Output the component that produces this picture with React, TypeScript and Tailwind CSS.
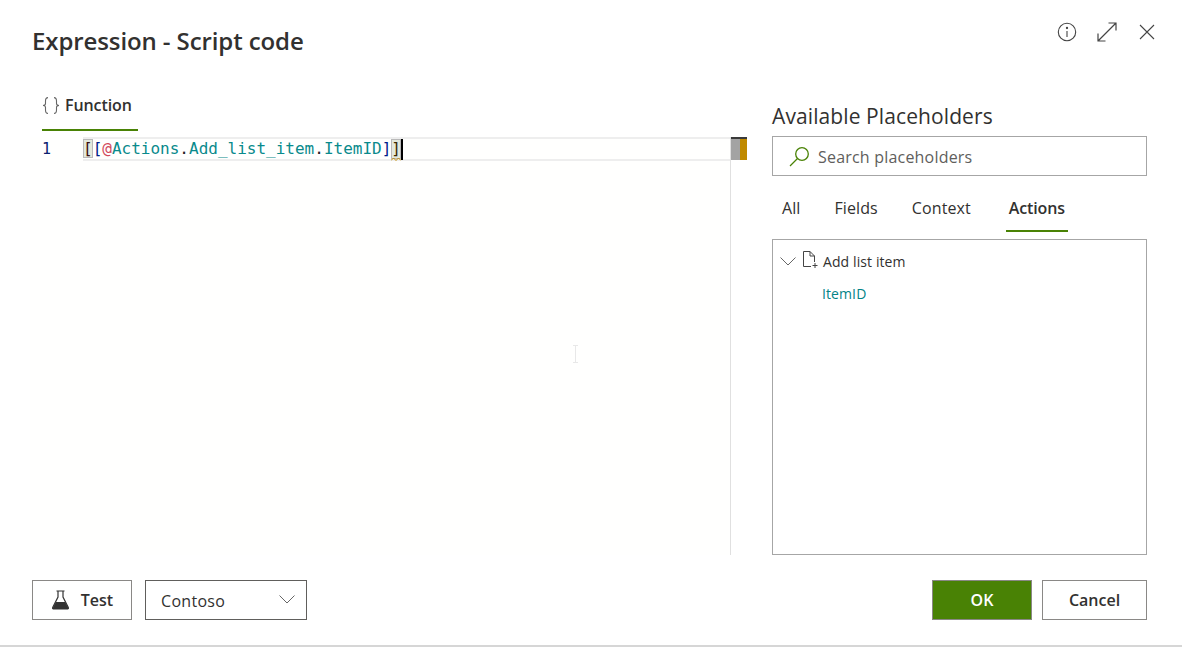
const uiFont = { fontFamily: '"Open Sans", "Noto Sans", sans-serif' }

// ─── Icons ─────────────────────────────────────────────────────────────────────

function InfoIcon() {
  return (
    <svg width="20" height="20" viewBox="0 0 20 20" fill="none" stroke="#444" strokeWidth="1.1">
      <circle cx="10" cy="10" r="8.7" />
      <path d="M10 9v6" />
      <circle cx="10" cy="6" r="0.6" fill="#444" />
    </svg>
  )
}

function ExpandIcon() {
  return (
    <svg width="20" height="20" viewBox="0 0 20 20" fill="none" stroke="#444" strokeWidth="1.2">
      <path d="M1 19 19 1M11.5 1H19V8.5M1 11.5V19H8.5" />
    </svg>
  )
}

function CloseIcon() {
  return (
    <svg width="16" height="16" viewBox="0 0 16 16" fill="none" stroke="#444" strokeWidth="1.1">
      <path d="M1 1l14 14M15 1 1 15" />
    </svg>
  )
}

function BracesIcon() {
  return (
    <svg width="18" height="17" viewBox="0 0 18 17" fill="none" stroke="#666" strokeWidth="1.1">
      <path d="M6 .6C3.500 .6 3.500 2 3.500 4v2.500C3.500 7.800 2.700 8.500 1 8.500c1.700 0 2.500.7 2.500 2V13c0 2 0 3.400 2.500 3.400" />
      <path d="M12 .6c2.500 0 2.500 1.400 2.500 3.400v2.500c0 1.300.8 2 2.500 2-1.700 0-2.500.7-2.500 2V13c0 2 0 3.400-2.500 3.400" />
    </svg>
  )
}

function FlaskIcon() {
  return (
    <svg width="19" height="20" viewBox="0 0 18 20" fill="none" stroke="#333" strokeWidth="1.2">
      <path d="M5 1h8M6.500 1v6L1.200 17.500Q.8 19 2.500 19h13q1.700 0 1.300-1.500L11.500 7V1" />
      <path d="M4.300 12h9.400l3.700 7H.7z" fill="#333" stroke="none" />
    </svg>
  )
}

function SearchIcon() {
  return (
    <svg width="21" height="21" viewBox="0 0 21 21" fill="none" stroke="#498205" strokeWidth="1.3">
      <circle cx="13" cy="8" r="6.300" />
      <path d="M8.500 12.500 1 20" />
    </svg>
  )
}

function AddDocIcon() {
  return (
    <svg width="16" height="17" viewBox="0 0 16 17" fill="none" stroke="#444" strokeWidth="1">
      <path d="M9 15.500H1.500V.5H8L12.500 5v6M8 .5V5h4.500M10.500 14.500h5M13 12v5" />
    </svg>
  )
}

function Chevron({ className }: { className?: string }) {
  return (
    <svg width="16" height="9" viewBox="0 0 16 9" fill="none" stroke="#666" strokeWidth="1" className={className}>
      <path d="M.5 .5 8 8 15.500 .5" />
    </svg>
  )
}

// ─── Editor ────────────────────────────────────────────────────────────────────

function CodeLine() {
  return (
    <div className="flex h-[24px] leading-[20px]" style={{ fontFamily: '"DejaVu Sans Mono", monospace' }}>
      <span className="w-[53px] shrink-0 pt-[2px] text-[15px] text-[#0b216f] pl-[12px]">1</span>
      <div className="flex flex-1 border-y-2 border-[#eeeeee]">
        <span className="text-[16px] whitespace-pre">
          <span className="bg-[#e3e8dc] outline outline-[#b9b9b9] -outline-offset-1 text-[#3a1010]">[</span>
          <span className="text-[#00208a]">[</span>
          <span className="text-[#d1495b]">@</span>
          <span className="text-[#098a8c]">Actions</span>
          <span className="text-[#222]">.</span>
          <span className="text-[#098a8c]">Add_list_item</span>
          <span className="text-[#222]">.</span>
          <span className="text-[#098a8c]">ItemID</span>
          <span className="text-[#00208a]">]</span>
          <span className="relative inline-block bg-[#e3e8dc] outline outline-[#b9b9b9] -outline-offset-1 text-[#3a2a00]">
            ]
            {/* warning squiggle */}
            <svg width="10" height="4" viewBox="0 0 10 4" fill="none" stroke="#c08a00" strokeWidth="1" className="absolute left-0 top-[18px]">
              <path d="M0 3.500 2.500 1 5 3.500 7.500 1 10 3.500" />
            </svg>
          </span>
        </span>
        <span className="w-[2px] h-[21px] bg-black" />
      </div>
    </div>
  )
}

// ─── Dialog ────────────────────────────────────────────────────────────────────

export default function App() {
  return (
    <div className="relative h-[647px] w-[1182px] overflow-hidden bg-white flex flex-col border-b-2 border-[#d6d6d6] text-[#323130]" style={uiFont}>
      {/* Header */}
      <div className="h-[85px] flex justify-between pl-[32px] pr-[27px] shrink-0">
        <h1 className="text-[24px] leading-[32px] mt-[25px] font-[560] tracking-[-0.1px]">Expression - Script code</h1>
        <div className="flex items-center h-[18px] mt-[23px]">
          <InfoIcon />
          <span className="ml-[20px] flex"><ExpandIcon /></span>
          <span className="ml-[22px] flex"><CloseIcon /></span>
        </div>
      </div>

      {/* Body */}
      <div className="flex flex-1 min-h-0">
        <div className="w-[701px] ml-[30px] mr-[41px] flex flex-col shrink-0 bg-[#fffffe]">
          <div className="flex pl-[12px] h-[52px] shrink-0 bg-white">
            <div className="w-[96px] h-[46px] border-b-2 border-[#498205] flex items-center gap-[5px] pb-[4px]">
              <BracesIcon />
              <span className="text-[16px] font-semibold tracking-[-0.1px]">Function</span>
            </div>
          </div>
          <div className="relative flex-1 border-r border-[#e0e0e0]">
            <CodeLine />
            {/* overview ruler */}
            <div className="absolute top-0 -right-[17px] w-[16px] h-[23px] flex border-t-2 border-[#3a3a3a]">
              <span className="w-[9px] bg-[#a3a3a3]" />
              <span className="w-[7px] bg-[#c08a00]" />
            </div>
            {/* mouse cursor */}
            <div className="absolute left-[543px] top-[208px] w-[5px] h-[18px] flex flex-col items-center justify-between">
              <span className="w-[5px] h-px bg-[#e8e8e8]" />
              <span className="w-px flex-1 bg-[#e8e8e8]" />
              <span className="w-[5px] h-px bg-[#e8e8e8]" />
            </div>
          </div>
        </div>

        <div className="w-[375px] shrink-0 flex flex-col">
          <h2 className="text-[21px] leading-[28px] mt-[17px] tracking-[0.1px]">Available Placeholders</h2>
          <div className="mt-[6px] h-[40px] border border-[#a6a6a6] flex items-center pl-[16px] gap-[8px] shrink-0">
            <SearchIcon />
            <span className="text-[16px] text-[#605e5c] tracking-[0.2px] mt-[1px]">Search placeholders</span>
          </div>
          <div className="flex h-[56px] shrink-0 text-[16px] tracking-[0.1px]">
            <span className="ml-[10px] mt-[20px]">All</span>
            <span className="ml-[34px] mt-[20px]">Fields</span>
            <span className="ml-[34px] mt-[20px]">Context</span>
            <span className="ml-[35px] pt-[20px] w-[62px] h-[56px] border-b-2 border-[#498205] font-semibold text-center tracking-[-0.1px]">Actions</span>
          </div>
          <div className="mt-[7px] flex-1 border border-[#a6a6a6] px-[7px] pt-[10px]">
            <div className="flex items-center h-[22px]">
              <Chevron />
              <span className="ml-[6px] -mt-[3px] flex"><AddDocIcon /></span>
              <span className="ml-[5px] text-[14px] tracking-[0.1px]">Add list item</span>
            </div>
            <div className="ml-[42px] mt-[11px] text-[14px] text-[#038387] tracking-[0.1px]">ItemID</div>
          </div>
        </div>
      </div>

      {/* Footer */}
      <div className="h-[90px] shrink-0 flex justify-between pl-[32px] pr-[35px] pt-[25px]">
        <div className="flex gap-[13px]">
          <button className="w-[100px] h-[40px] border border-[#8a8886] flex items-center justify-center gap-[11px] font-semibold text-[16px]">
            <FlaskIcon />
            Test
          </button>
          <div className="w-[162px] h-[40px] border border-[#605e5c] flex items-center justify-between pl-[15px] pr-[11px] text-[16px] tracking-[0.3px]">
            <span className="mt-[2px]">Contoso</span>
            <Chevron className="-mt-[2px]" />
          </div>
        </div>
        <div className="flex gap-[10px]">
          <button className="w-[100px] h-[40px] bg-[#498205] border border-[#8a8886] text-white font-semibold text-[16px]">OK</button>
          <button className="w-[105px] h-[40px] border border-[#8a8886] font-semibold text-[16px]">Cancel</button>
        </div>
      </div>
    </div>
  )
}
